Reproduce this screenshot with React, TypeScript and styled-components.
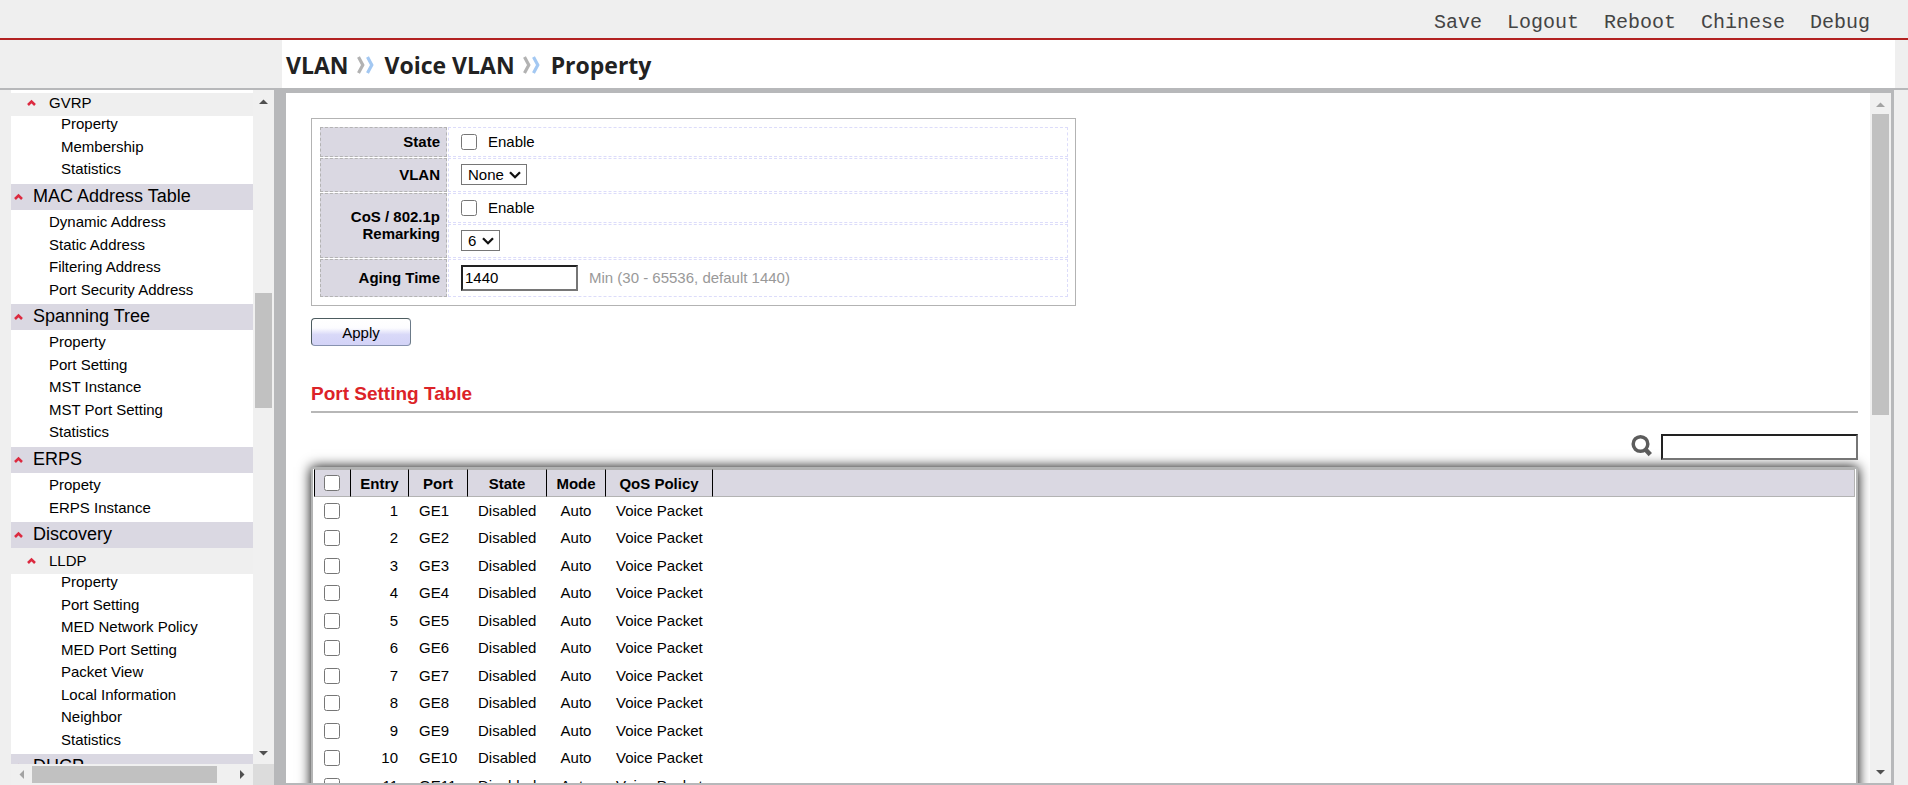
import React from "react";
import styled, { createGlobalStyle } from "styled-components";

const GlobalStyle = createGlobalStyle`
  *, *::before, *::after { box-sizing: border-box; }
  body {
    margin: 0;
    background: #efefef;
    color: #000;
    font: 15px/17px Arial, "Liberation Sans", sans-serif;
  }
  ul { list-style: none; margin: 0; padding: 0; }
  a { color: inherit; text-decoration: none; }
`;

const Page = styled.div`
  display: flex;
  flex-direction: column;
  height: 100vh;
  overflow: hidden;
`;

const TopBar = styled.nav`
  flex: none;
  display: flex;
  align-items: center;
  justify-content: flex-end;
  gap: 25px;
  height: 40px;
  padding: 8px 38px 0 0;
  border-bottom: 2px solid #b22222;
  color: #444;
  font: 20px/24px "Courier New", "Liberation Mono", monospace;
`;

const TitleBar = styled.header`
  flex: none;
  height: 50px;
  padding: 0 13px 0 282px;
  border-bottom: 2px solid #b7b8ba;
`;

const Breadcrumb = styled.h1`
  display: flex;
  align-items: center;
  gap: 10px;
  height: 48px;
  margin: 0;
  padding: 2px 4px 0;
  background: #fff;
  color: #222;
  font: 700 23px/32px "Open Sans", "Noto Sans", sans-serif;
`;

const Crumb = styled.span`
  display: flex;
  align-items: center;
  gap: 7px;
`;

const Body = styled.div`
  flex: 1;
  display: flex;
  min-height: 0;
`;

const Sidebar = styled.aside`
  flex: none;
  display: grid;
  grid-template: minmax(0, 1fr) 21px / 242px 21px;
  padding-left: 11px;
`;

const Menu = styled.nav`
  overflow: hidden;
  padding-top: 3px;
  background: #fff;
`;

const GroupTitle = styled.div`
  display: flex;
  align-items: center;
  gap: 10px;
  height: 26px;
  padding: 0 0 2px 3px;
  background: #dad8e2;
  font-size: 18px;
  line-height: 24px;
`;

const SubTitle = styled.div<{ $gap?: boolean }>`
  display: flex;
  align-items: center;
  gap: 13px;
  box-sizing: content-box;
  height: 18px;
  padding: 0 0 5px 16px;
  border-top: ${(p) => (p.$gap ? "3px" : "0")} solid #efefef;
  background: #efefef;
`;

const MenuList = styled.ul<{ $level: 2 | 3 }>`
  padding: ${(p) => (p.$level === 2 ? "4px 0 0 38px" : "0 0 0 50px")};
`;

const MenuItem = styled.li`
  height: 23px;
  line-height: 16px;
  &:nth-child(even) { height: 22px; }
  a { display: block; }
`;

const Track = styled.div<{ $row?: boolean }>`
  display: flex;
  flex-direction: ${(p) => (p.$row ? "row" : "column")};
  align-items: center;
  background: #f0f0f0;
`;

const Spacer = styled.div<{ $grow: number }>`
  flex: ${(p) => p.$grow} 1 0;
`;

const Thumb = styled.div<{ $grow: number; $row?: boolean }>`
  flex: ${(p) => p.$grow} 1 0;
  ${(p) => (p.$row ? "height: 17px;" : "width: 17px;")}
  background: #c1c1c1;
`;

const Corner = styled.div`
  background: #dcdcdc;
`;

const ArrowBox = styled.svg`
  flex: none;
  display: block;
  width: 21px;
  height: 21px;
`;

const Frame = styled.main`
  flex: 1;
  display: flex;
  min-width: 0;
  margin: -2px 14px 0 0;
  border: solid #b7b8ba;
  border-width: 5px 3px 2px 12px;
  background: #fff;
`;

const Content = styled.div`
  flex: 1;
  min-width: 0;
  overflow: hidden;
  padding: 25px 12px 0 25px;
`;

const FormFrame = styled.div`
  width: calc(50% - 9px);
  padding: 7px 6px 7px 7px;
  border: 1px solid #b3b3b3;
`;

const FormTable = styled.table`
  width: 100%;
  border-spacing: 1px;
`;

const Label = styled.th`
  width: 127px;
  padding: 0 6px 2px 0;
  border: 1px dashed #b3b3b3;
  background: #dad8e2;
  text-align: right;
`;

const Value = styled.td<{ $h: number }>`
  height: ${(p) => p.$h}px;
  padding: 0 12px 1px;
  border: 1px dashed #dcdcfa;
`;

const Field = styled.div`
  display: flex;
  align-items: center;
  gap: 11px;
`;

const Check = styled.input.attrs({ type: "checkbox" })`
  display: block;
  flex: none;
  width: 16px;
  height: 16px;
  margin: 0;
`;

const CheckLabel = styled.label`
  display: flex;
  align-items: center;
  gap: 11px;
`;

const SelectWrap = styled.span<{ $w: number }>`
  position: relative;
  display: block;
  width: ${(p) => p.$w}px;
  svg {
    position: absolute;
    top: 7px;
    right: 6px;
    pointer-events: none;
  }
`;

const Select = styled.select`
  display: block;
  appearance: none;
  width: 100%;
  height: 21px;
  padding: 0 6px;
  border: 1px solid #767676;
  border-radius: 0;
  background: #fff;
  color: #000;
  font: 15px/17px Arial, "Liberation Sans", sans-serif;
`;

const TextBox = styled.input.attrs({ type: "text" })<{ $w: number }>`
  width: ${(p) => p.$w}px;
  height: 26px;
  padding: 0 2px;
  border: 2px solid;
  border-color: #222 #767676 #767676 #222;
  background: #fff;
  color: #000;
  font: 15px/17px Arial, "Liberation Sans", sans-serif;
`;

const Hint = styled.span`
  color: #999;
`;

const ApplyButton = styled.button`
  display: block;
  width: 100px;
  height: 28px;
  margin-top: 12px;
  padding: 0;
  border: 1px solid;
  border-color: #4d5c60 #6b7a88 #8792b0 #4d5c60;
  border-radius: 4px;
  background: linear-gradient(#fff 0%, #fcfcff 35%, #d9d9f8 60%, #d3d3f7 100%);
  color: #000;
  font: 15px/17px Arial, "Liberation Sans", sans-serif;
`;

const Heading = styled.h2`
  margin: 34px 0 21px;
  padding: 3px 0 7px;
  border-bottom: 2px solid #b7b7b7;
  color: #dc2328;
  font-size: 19px;
  line-height: 21px;
`;

const SearchRow = styled.label`
  display: flex;
  align-items: flex-start;
  justify-content: flex-end;
  gap: 9px;
  height: 27px;
`;

const Card = styled.div`
  margin-top: 6px;
  padding: 0 1px;
  border: 2px solid #b3b4b4;
  background: #fff;
  box-shadow: 0 0 12px #000;
`;

const PortTable = styled.table`
  width: 100%;
  border-collapse: separate;
  border-spacing: 0;
  table-layout: fixed;
  th {
    height: 28px;
    padding: 0;
    border: solid #b3b3b3;
    border-width: 1px 0;
    border-left: 1px solid #000;
    background: #dad8e2;
  }
  th:last-child { border-right: 1px solid #b3b3b3; }
  td {
    height: 27px;
    padding: 0 10px 1px 11px;
    white-space: nowrap;
  }
  td:first-child { padding: 0; }
  tbody tr:nth-child(even) td { height: 28px; }
`;

const Col = styled.col<{ $w?: number }>`
  width: ${(p) => (p.$w ? `${p.$w}px` : "auto")};
`;

const Cell = styled.td<{ $align?: string }>`
  text-align: ${(p) => p.$align || "left"};
`;

const CheckWrap = styled.span`
  display: flex;
  justify-content: center;
  padding-right: 1px;
`;

const Caret = () => (
  <svg width="9" height="8" viewBox="0 0 9 8" aria-hidden="true">
    <path d="M1 7 4.5 3.6 8 7" fill="none" stroke="#dc2a40" strokeWidth="2.6" />
  </svg>
);

const Chevrons = () => (
  <svg width="19" height="20" viewBox="0 0 19 20" aria-hidden="true">
    <path d="M2.5 2 6.8 10 2.5 18" fill="none" stroke="#b2b2b2" strokeWidth="3.2" />
    <path d="M11.5 2 15.8 10 11.5 18" fill="none" stroke="#a3c8f2" strokeWidth="3.2" />
  </svg>
);

const SearchIcon = () => (
  <svg width="21" height="23" viewBox="0 0 21 23" aria-hidden="true">
    <circle cx="9.5" cy="10" r="7.3" fill="none" stroke="#5c5c5c" strokeWidth="3.5" />
    <path d="M14.5 15.5 19.3 20.6" stroke="#5c5c5c" strokeWidth="4.6" />
  </svg>
);

const SelectArrow = () => (
  <svg width="12" height="8" viewBox="0 0 12 8" aria-hidden="true">
    <path d="M1 1.2 6 6.2 11 1.2" fill="none" stroke="#111" strokeWidth="2.3" />
  </svg>
);

const arrows = {
  up: "M6 14 10.5 9.5 15 14Z",
  down: "M6 8 10.5 12.5 15 8Z",
  left: "M13 6 8.5 10.5 13 15Z",
  right: "M8 6 12.5 10.5 8 15Z",
};

const Arrow = ({ dir, muted }: { dir: keyof typeof arrows; muted?: boolean }) => (
  <ArrowBox viewBox="0 0 21 21" aria-hidden="true">
    <path d={arrows[dir]} fill={muted ? "#a3a3a3" : "#505050"} />
  </ArrowBox>
);

const Items = ({ level, items }: { level: 2 | 3; items: string[] }) => (
  <MenuList $level={level}>
    {items.map((t) => (
      <MenuItem key={t}>
        <a href="#">{t}</a>
      </MenuItem>
    ))}
  </MenuList>
);

const Group = ({ title }: { title: string }) => (
  <GroupTitle>
    <Caret />
    <a href="#">{title}</a>
  </GroupTitle>
);

const Sub = ({ title, gap }: { title: string; gap?: boolean }) => (
  <SubTitle $gap={gap}>
    <Caret />
    <a href="#">{title}</a>
  </SubTitle>
);

const DropDown = ({ id, width, value }: { id: string; width: number; value: string }) => (
  <SelectWrap $w={width}>
    <Select id={id}>
      <option>{value}</option>
    </Select>
    <SelectArrow />
  </SelectWrap>
);

const RowCheck = ({ label }: { label: string }) => (
  <CheckWrap>
    <Check aria-label={label} />
  </CheckWrap>
);

const ports = Array.from({ length: 12 }, (_, i) => i + 1);

export default function App() {
  return (
    <Page>
      <GlobalStyle />
      <TopBar>
        {["Save", "Logout", "Reboot", "Chinese", "Debug"].map((t) => (
          <a href="#" key={t}>{t}</a>
        ))}
      </TopBar>
      <TitleBar>
        <Breadcrumb>
          <Crumb>VLAN <Chevrons /></Crumb>
          <Crumb>Voice VLAN <Chevrons /></Crumb>
          <Crumb>Property</Crumb>
        </Breadcrumb>
      </TitleBar>
      <Body>
        <Sidebar>
          <Menu>
            <Sub title="GVRP" />
            <Items level={3} items={["Property", "Membership", "Statistics"]} />
            <Group title="MAC Address Table" />
            <Items level={2} items={["Dynamic Address", "Static Address", "Filtering Address", "Port Security Address"]} />
            <Group title="Spanning Tree" />
            <Items level={2} items={["Property", "Port Setting", "MST Instance", "MST Port Setting", "Statistics"]} />
            <Group title="ERPS" />
            <Items level={2} items={["Propety", "ERPS Instance"]} />
            <Group title="Discovery" />
            <Sub title="LLDP" gap />
            <Items
              level={3}
              items={["Property", "Port Setting", "MED Network Policy", "MED Port Setting", "Packet View", "Local Information", "Neighbor", "Statistics"]}
            />
            <Group title="DHCP" />
          </Menu>
          <Track>
            <Arrow dir="up" />
            <Spacer $grow={182} />
            <Thumb $grow={115} />
            <Spacer $grow={335} />
            <Arrow dir="down" />
          </Track>
          <Track $row>
            <Arrow dir="left" muted />
            <Thumb $grow={185} $row />
            <Spacer $grow={15} />
            <Arrow dir="right" />
          </Track>
          <Corner />
        </Sidebar>
        <Frame>
          <Content>
            <form onSubmit={(e) => e.preventDefault()}>
              <FormFrame>
                <FormTable>
                  <tbody>
                    <tr>
                      <Label scope="row">State</Label>
                      <Value $h={30}><CheckLabel><Check />Enable</CheckLabel></Value>
                    </tr>
                    <tr>
                      <Label scope="row"><label htmlFor="vlan">VLAN</label></Label>
                      <Value $h={34}><DropDown id="vlan" width={66} value="None" /></Value>
                    </tr>
                    <tr>
                      <Label scope="rowgroup" rowSpan={2}>
                        <label htmlFor="cos">CoS / 802.1p<br />Remarking</label>
                      </Label>
                      <Value $h={30}><CheckLabel><Check />Enable</CheckLabel></Value>
                    </tr>
                    <tr>
                      <Value $h={34}><DropDown id="cos" width={39} value="6" /></Value>
                    </tr>
                    <tr>
                      <Label scope="row"><label htmlFor="aging">Aging Time</label></Label>
                      <Value $h={38}>
                        <Field>
                          <TextBox id="aging" $w={117} defaultValue="1440" />
                          <Hint>Min (30 - 65536, default 1440)</Hint>
                        </Field>
                      </Value>
                    </tr>
                  </tbody>
                </FormTable>
              </FormFrame>
              <ApplyButton type="submit">Apply</ApplyButton>
            </form>
            <Heading>Port Setting Table</Heading>
            <SearchRow>
              <SearchIcon />
              <TextBox $w={197} aria-label="Search" />
            </SearchRow>
            <Card>
              <PortTable>
                <colgroup>
                  <Col $w={36} /><Col $w={58} /><Col $w={59} /><Col $w={79} /><Col $w={59} /><Col $w={107} /><Col />
                </colgroup>
                <thead>
                  <tr>
                    <th><RowCheck label="Select all ports" /></th>
                    <th scope="col">Entry</th>
                    <th scope="col">Port</th>
                    <th scope="col">State</th>
                    <th scope="col">Mode</th>
                    <th scope="col">QoS Policy</th>
                    <th />
                  </tr>
                </thead>
                <tbody>
                  {ports.map((n) => (
                    <tr key={n}>
                      <Cell><RowCheck label={`Select GE${n}`} /></Cell>
                      <Cell $align="right">{n}</Cell>
                      <Cell>GE{n}</Cell>
                      <Cell>Disabled</Cell>
                      <Cell $align="center">Auto</Cell>
                      <Cell>Voice Packet</Cell>
                      <Cell />
                    </tr>
                  ))}
                </tbody>
              </PortTable>
            </Card>
          </Content>
          <Track>
            <Arrow dir="up" muted />
            <Thumb $grow={301} />
            <Spacer $grow={347} />
            <Arrow dir="down" />
          </Track>
        </Frame>
      </Body>
    </Page>
  );
}
